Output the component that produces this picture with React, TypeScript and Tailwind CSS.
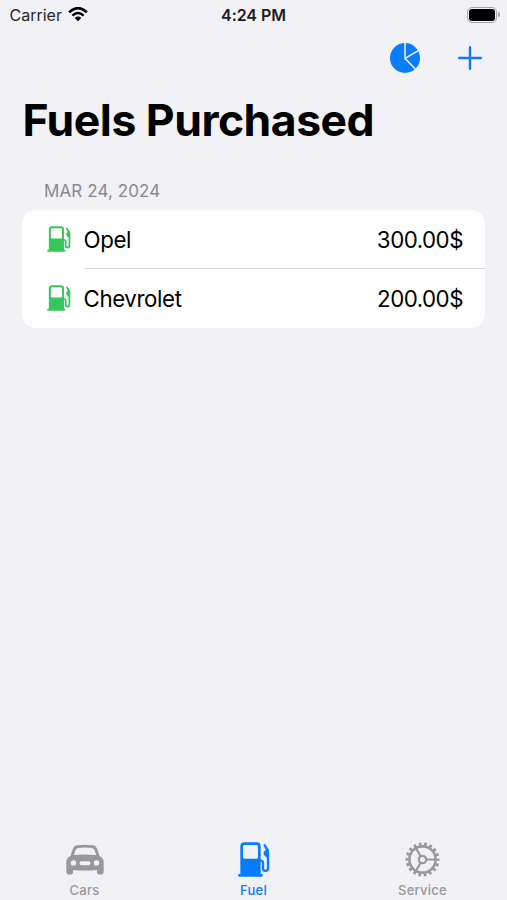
import clsx from "clsx";
import type { ReactNode } from "react";

interface IconProps {
  className?: string;
}

function FuelPumpIcon({ className }: IconProps) {
  return (
    <svg viewBox="0 0 96 105" className={className} fill="none" aria-hidden="true">
      <path
        fill="currentColor"
        fillRule="evenodd"
        d="M7 96V13Q7 1 19 1H56Q68 1 68 13V96H70Q75 96 75 100Q75 104 70 104H5Q0 104 0 100Q0 96 5 96ZM20 9Q15 9 15 14V46Q15 50 19 50H56Q60 50 60 46V14Q60 9 55 9Z"
      />
      <path
        d="M65 56H68Q75 56 75 63V79Q75 87 82.500 87Q90 87 90 79V31Q90 25 87 21L80 10"
        stroke="currentColor"
        strokeWidth="7"
        strokeLinecap="round"
      />
      <path fill="currentColor" d="M81 12L93 25V47H87L77 38V30L83 24Z" />
    </svg>
  );
}

function CarIcon({ className }: IconProps) {
  return (
    <svg viewBox="0 0 112 90" className={className} fill="currentColor" aria-hidden="true">
      <path
        fillRule="evenodd"
        d="M13 35L20 14Q24 4 34 3Q56 0 78 3Q88 4 92 14L99 35Q111 41 111 52V82Q111 89 105 89H97Q91 89 91 82V76Q56 79 21 76V82Q21 89 15 89H7Q1 89 1 82V52Q1 41 13 35ZM23 32Q56 28 89 32L84 17Q82 12 76 11Q56 8 36 11Q30 12 28 17ZM22 47A8 8 0 1 0 22 63A8 8 0 1 0 22 47ZM90 47A8 8 0 1 0 90 63A8 8 0 1 0 90 47ZM45 50Q40 50 40 56Q40 62 45 62H67Q72 62 72 56Q72 50 67 50Z"
      />
    </svg>
  );
}

function GearIcon({ className }: IconProps) {
  return (
    <svg viewBox="-52 -52 104 104" className={className} fill="none" stroke="currentColor" aria-hidden="true">
      <circle r="46" strokeWidth="9" pathLength="180" strokeDasharray="5 5" strokeDashoffset="2.5" />
      <circle r="39" strokeWidth="7.5" />
      <circle r="11" strokeWidth="6.5" />
      <path d="M13 0H38M-6.5 -11.3L-19 -33M-6.5 11.3L-19 33" strokeWidth="6.5" />
    </svg>
  );
}

function PieIcon({ className }: IconProps) {
  return (
    <svg viewBox="0 0 90 90" className={className} aria-hidden="true">
      <circle cx="45" cy="45" r="45" fill="currentColor" />
      <path d="M45 0V46L78 80M45 46L85 23" fill="none" stroke="#f1f1f6" strokeWidth="4.5" />
    </svg>
  );
}

function WifiIcon({ className }: IconProps) {
  return (
    <svg viewBox="0 0 60 44" className={className} fill="none" stroke="currentColor" aria-hidden="true">
      <path d="M3 16Q30 -9 57 16" strokeWidth="8" />
      <path d="M13 26Q30 10 47 26" strokeWidth="7.5" />
      <path d="M20 33Q30 24 40 33L30 43Z" fill="currentColor" stroke="none" />
    </svg>
  );
}

const purchases = [
  { id: 1, car: "Opel", amount: "300.00$" },
  { id: 2, car: "Chevrolet", amount: "200.00$" },
];

function StatusBar() {
  return (
    <div className="grid h-[29px] grid-cols-3 items-center text-[16px] text-[#262629]">
      <div className="flex items-center pl-[9.5px]">
        <span>Carrier</span>
        <WifiIcon className="ml-[6px] h-[14.5px] w-5 text-black" />
      </div>
      <span className="text-center font-semibold tracking-[-0.05px] whitespace-nowrap text-[#1c1c1e]">4:24 PM</span>
      <div className="flex items-center justify-end pr-[7px]">
        <span className="h-4 w-[30px] rounded-[5px] border-[1.5px] border-[#a5a5a8] p-px">
          <span className="block h-full rounded-[3px] bg-black" />
        </span>
        <span className="ml-px h-[5px] w-[2px] rounded-r-full bg-[#a5a5a8]" />
      </div>
    </div>
  );
}

interface TabProps {
  label: string;
  active?: boolean;
  children: ReactNode;
}

function Tab({ label, active, children }: TabProps) {
  return (
    <button
      type="button"
      className={clsx("flex flex-1 flex-col items-center", active ? "text-[#087cff]" : "text-[#98989d]")}
    >
      <span className="flex h-[44px] items-center justify-center pb-[2px]">{children}</span>
      <span className="text-[13px] leading-4 font-medium tracking-[0.25px]">{label}</span>
    </button>
  );
}

export default function App() {
  return (
    <div className="flex h-screen flex-col overflow-hidden bg-[#f1f1f6] font-['Inter',sans-serif] text-black">
      <StatusBar />

      <nav className="flex h-[57px] items-center justify-end gap-[38px] pr-[25px] text-[#087cff]">
        <button type="button" aria-label="Statistics">
          <PieIcon className="h-[30px] w-[30px]" />
        </button>
        <button type="button" aria-label="Add">
          <svg viewBox="0 0 24 24" className="h-6 w-6" stroke="currentColor" strokeWidth="2.4" strokeLinecap="round">
            <path d="M12 1.2V22.8M1.2 12H22.8" />
          </svg>
        </button>
      </nav>

      <main className="flex-1 px-[22px]">
        <h1 className="mt-[6px] pl-[0.5px] text-[44.5px] leading-[56px] font-bold tracking-[-0.5px] whitespace-nowrap">
          Fuels Purchased
        </h1>

        <h2 className="mt-[32px] pl-[22px] text-[17px] leading-[22px] tracking-[0.1px] text-[#8a8a8f]">MAR 24, 2024</h2>
        <ul className="mt-[7.5px] overflow-hidden rounded-[14px] bg-white">
          {purchases.map((item, index) => (
            <li key={item.id} className="flex h-[59.25px] items-center pl-[24.5px]">
              <FuelPumpIcon className="h-[26px] w-6 shrink-0 text-[#34c759]" />
              <div
                className={clsx(
                  "ml-[13px] flex h-full flex-1 items-center justify-between pr-[22px] text-[22.3px]",
                  index < purchases.length - 1 ? "border-b border-[#d8d8dc] pt-[2px]" : "pt-px",
                )}
              >
                <span className="tracking-[-0.4px]">{item.car}</span>
                <span className="tracking-[-0.5px]">{item.amount}</span>
              </div>
            </li>
          ))}
        </ul>
      </main>

      <footer className="flex h-[62px]">
        <Tab label="Cars">
          <CarIcon className="h-[31px] w-[38px]" />
        </Tab>
        <Tab label="Fuel" active>
          <FuelPumpIcon className="h-[35px] w-8" />
        </Tab>
        <Tab label="Service">
          <GearIcon className="mr-px h-[35px] w-[35px]" />
        </Tab>
      </footer>
    </div>
  );
}
